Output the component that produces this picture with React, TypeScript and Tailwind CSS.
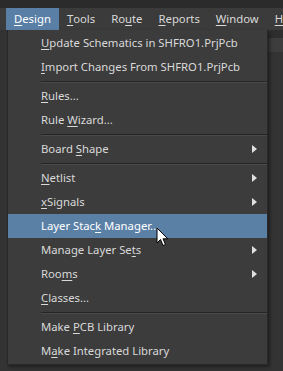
const font = { fontFamily: '"Noto Sans", "Open Sans", sans-serif' };

type Item =
  | { sep: true }
  | { sep?: false; pre: string; u: string; post: string; sub?: boolean; active?: boolean };

const items: Item[] = [
  { pre: "", u: "U", post: "pdate Schematics in SHFRO1.PrjPcb" },
  { pre: "", u: "I", post: "mport Changes From SHFRO1.PrjPcb" },
  { sep: true },
  { pre: "", u: "R", post: "ules..." },
  { pre: "Rule ", u: "W", post: "izard..." },
  { sep: true },
  { pre: "Board ", u: "S", post: "hape", sub: true },
  { sep: true },
  { pre: "", u: "N", post: "etlist", sub: true },
  { pre: "", u: "x", post: "Signals", sub: true },
  { pre: "Layer Stac", u: "k", post: " Manager...", active: true },
  { pre: "Manage Layer Se", u: "t", post: "s", sub: true },
  { pre: "Roo", u: "m", post: "s", sub: true },
  { pre: "", u: "C", post: "lasses..." },
  { sep: true },
  { pre: "Make ", u: "P", post: "CB Library" },
  { pre: "M", u: "a", post: "ke Integrated Library" },
];

const bar = [
  { u: "D", post: "esign", active: true },
  { u: "T", post: "ools" },
  { pre: "Ro", u: "u", post: "te" },
  { u: "R", post: "eports" },
  { u: "W", post: "indow" },
  { u: "H", post: "elp" },
];

function Cursor() {
  return (
    <svg width="13" height="20" viewBox="0 0 13 20" className="absolute left-[148px] top-[13px] z-10">
      <path d="M1 1 L1 16 L4.5 12.5 L7 18.5 L9.5 17.5 L7 11.8 L11.8 11.8 Z" fill="#fff" stroke="#000" strokeWidth="1" />
    </svg>
  );
}

export default function App() {
  return (
    <div className="w-[283px] h-[371px] bg-[#333333] overflow-hidden text-[11.3px] text-[#d9d9d9]" style={font}>
      <div className="h-[8px] bg-[#2b2b2b]" />
      <div className="h-[22px] bg-[#3b3b3b] flex items-stretch pl-[6px] whitespace-nowrap">
        {bar.map((b, i) => (
          <div
            key={i}
            className={`flex items-center px-[8px] pt-[1px] ${b.active ? "bg-[#5a7fa6] text-white" : ""}`}
          >
            {b.pre}
            <u className="underline-offset-2">{b.u}</u>
            {b.post}
          </div>
        ))}
      </div>
      <div className="flex">
        <div className="w-[7px]" />
        <div className="w-[261px] h-[335px] bg-[#3c3c3c] border border-[#282828] border-t-0 shadow-[2px_2px_3px_rgba(0,0,0,0.4)] pt-[1px] relative">
          {items.map((it, i) =>
            it.sep ? (
              <div key={i} className="h-[5px] flex items-center pl-[33px]">
                <div className="w-full h-px bg-[#252525] border-b border-[#4a4a4a] box-content" />
              </div>
            ) : (
              <div
                key={i}
                className={`h-[24px] flex items-center pl-[33px] pr-[10px] relative ${it.active ? "bg-[#5b80a6] text-white" : ""}`}
              >
                <span className="flex-1">
                  {it.pre}
                  <u className="underline-offset-2">{it.u}</u>
                  {it.post}
                </span>
                {it.sub && (
                  <svg width="5" height="8" viewBox="0 0 5 8">
                    <path d="M0 0 L5 4 L0 8 Z" fill="#e0e0e0" />
                  </svg>
                )}
                {it.active && <Cursor />}
              </div>
            )
          )}
        </div>
        <div className="flex-1 flex flex-col">
          <div className="h-[8px] bg-[#2e2e2e]" />
          <div className="h-[14px] bg-[#3d3d3d]" />
        </div>
      </div>
    </div>
  );
}
